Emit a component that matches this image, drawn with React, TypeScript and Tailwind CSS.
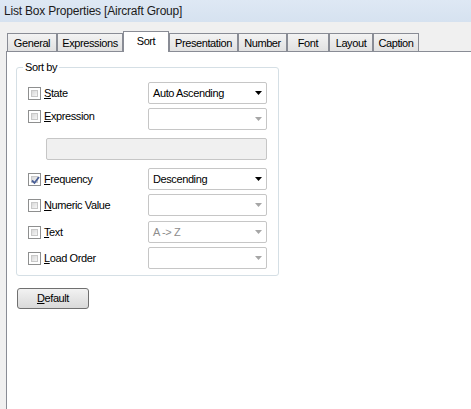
import React from 'react';

const tabs = [
  { label: 'General', w: 50 },
  { label: 'Expressions', w: 66 },
  { label: 'Sort', w: 46, active: true },
  { label: 'Presentation', w: 69 },
  { label: 'Number', w: 49 },
  { label: 'Font', w: 42 },
  { label: 'Layout', w: 44 },
  { label: 'Caption', w: 46 },
];

function Key({ k, rest }: { k: string; rest: string }) {
  return (
    <span>
      <span className="underline underline-offset-[1px]">{k}</span>
      {rest}
    </span>
  );
}

function Checkbox({ checked }: { checked?: boolean }) {
  return (
    <div className="h-[13px] w-[13px] shrink-0 border border-[#8e8f8f] bg-white p-[2px]">
      <div className="relative h-full w-full border border-[#c8c8c8] bg-gradient-to-br from-[#d8d8d8] to-[#f6f6f6]">
        {checked && (
          <svg width="9" height="9" viewBox="0 0 9 9" className="absolute left-[-1px] top-[-1px]">
            <path d="M1 4.5 L3.5 7 L8 1" fill="none" stroke="#4a5f97" strokeWidth="1.8" />
          </svg>
        )}
      </div>
    </div>
  );
}

function Dropdown({ value, disabled }: { value?: string; disabled?: boolean }) {
  return (
    <div className="flex h-[22px] w-[119px] items-center justify-between rounded-[2px] border border-[#c6c6c6] bg-white pl-[4px] pr-[4px]">
      <span className={disabled ? 'text-[#8d8d8d]' : 'text-black'}>{value ?? ''}</span>
      <svg width="7" height="4" viewBox="0 0 7 4">
        <path d="M0 0 H7 L3.5 4 Z" fill={disabled ? '#a6a6a6' : '#000'} />
      </svg>
    </div>
  );
}

function Row({ label, checked, value, disabled, top }: { label: React.ReactNode; checked?: boolean; value?: string; disabled?: boolean; top?: boolean }) {
  return (
    <div className="flex h-[22px]">
      <div className={`flex w-[120px] gap-[3px] ${top ? 'items-start pt-[2px]' : 'items-center'}`}>
        <Checkbox checked={checked} />
        <span className="leading-[13px]">{label}</span>
      </div>
      <Dropdown value={value} disabled={disabled} />
    </div>
  );
}

export default function App() {
  return (
    <div
      className="flex h-[409px] w-[471px] flex-col overflow-hidden bg-[#f0f0f0] text-[11px] tracking-[-0.4px] text-black"
      style={{ fontFamily: '"Liberation Sans", Arial, sans-serif' }}
    >
      <div className="flex h-[22px] items-center bg-gradient-to-b from-[#dee8f4] to-[#d6e2f0] pl-[4px] text-[12px] tracking-[-0.2px] text-[#1b1b1b]">
        List Box Properties [Aircraft Group]
      </div>

      <div className="relative z-10 flex h-[29px] items-end pl-[7px]">
        {tabs.map(t =>
          t.active ? (
            <div
              key={t.label}
              className="-mb-px flex h-[21px] items-start justify-center border border-b-0 border-[#898c95] bg-white pt-[1px]"
              style={{ width: t.w }}
            >
              {t.label}
            </div>
          ) : (
            <div
              key={t.label}
              className="flex h-[18px] items-center justify-center border border-b-0 border-[#898c95] bg-gradient-to-b from-[#f3f3f3] to-[#e1e1e1] pt-[1px]"
              style={{ width: t.w }}
            >
              {t.label}
            </div>
          )
        )}
      </div>

      <div className="ml-[6px] flex-1 border-l border-t border-[#898c95] bg-white pl-[9px] pt-[15px]">
        <div className="relative w-[263px] rounded-[3px] border border-[#d5dfe5] pb-[6px] pl-[11px] pt-[14px]">
          <span className="absolute left-[6px] top-[-8px] bg-white px-[2px] leading-[14px]">Sort by</span>
          <div className="flex flex-col">
            <Row label={<Key k="S" rest="tate" />} value="Auto Ascending" />
            <div className="mt-[4px]">
              <Row label={<Key k="E" rest="xpression" />} disabled top />
            </div>
            <div className="ml-[18px] mt-[8px] h-[22px] w-[221px] rounded-[2px] border border-[#c6c6c6] bg-[#f0f0f0]" />
            <div className="mt-[8px]">
              <Row label={<Key k="F" rest="requency" />} checked value="Descending" />
            </div>
            <div className="mt-[4px]">
              <Row label={<Key k="N" rest="umeric Value" />} disabled />
            </div>
            <div className="mt-[5px]">
              <Row label={<Key k="T" rest="ext" />} disabled value="A -> Z" />
            </div>
            <div className="mt-[4px]">
              <Row label={<Key k="L" rest="oad Order" />} disabled />
            </div>
          </div>
        </div>

        <button className="ml-[1px] mt-[12px] flex h-[21px] w-[72px] items-center justify-center rounded-[3px] border border-[#707070] bg-gradient-to-b from-[#f2f2f2] to-[#d9d9d9]">
          <Key k="D" rest="efault" />
        </button>
      </div>
    </div>
  );
}
